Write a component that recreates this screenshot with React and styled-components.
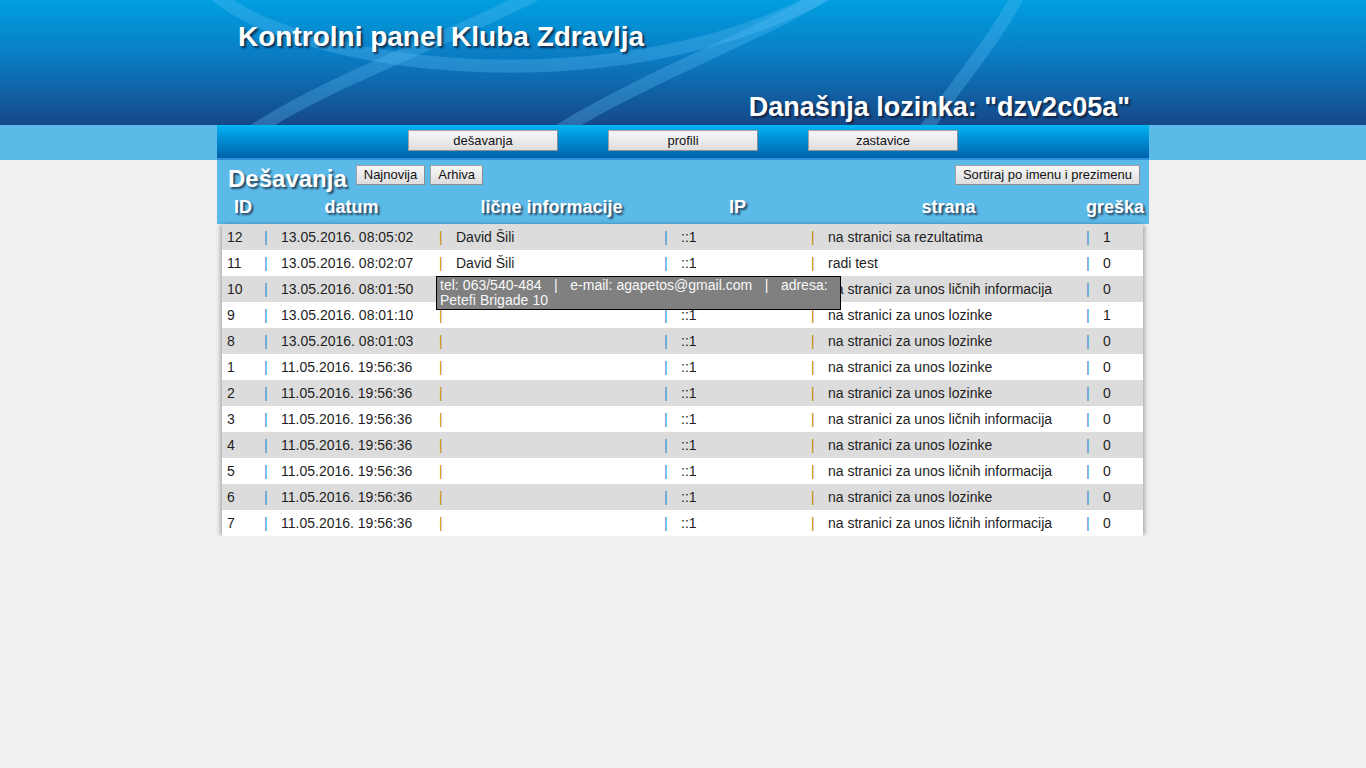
import React from "react";
import styled, { createGlobalStyle } from "styled-components";

const GlobalStyle = createGlobalStyle`
  html, body { margin: 0; padding: 0; }
  body {
    background: #f0f0f0;
    font-family: "Liberation Sans", Arial, sans-serif;
  }
`;

const Header = styled.header`
  position: relative;
  height: 125px;
  overflow: hidden;
  background: linear-gradient(to bottom, #009fe0 0%, #0a7cc4 45%, #164888 100%);
`;

const Decoration = styled.svg`
  position: absolute;
  left: 0;
  top: 0;
  width: 1366px;
  height: 125px;
  pointer-events: none;
`;

const HeaderInner = styled.div`
  position: relative;
  width: 932px;
  height: 125px;
  margin: 0 auto;
  box-sizing: border-box;
  padding: 21px 19px 2px 21px;
  display: flex;
  flex-direction: column;
  justify-content: space-between;
`;

const HeadText = styled.div`
  color: #fff;
  font-weight: bold;
  font-size: ${(p) => p.$size}px;
  line-height: 32px;
  text-align: ${(p) => p.$align || "left"};
  text-shadow: 2px 2px 2px rgba(20, 20, 40, 0.75);
  white-space: nowrap;
`;

const NavBand = styled.nav`
  background: #5bbae8;
  height: 35px;
`;

const NavInner = styled.div`
  width: 932px;
  height: 35px;
  margin: 0 auto;
  box-sizing: border-box;
  border-bottom: 2px solid #2a8fdc;
  background: linear-gradient(to bottom, #00b6f2 0%, #0090d8 40%, #0062aa 100%);
  display: flex;
  justify-content: center;
  align-items: flex-start;
  gap: 50px;
  padding-top: 5px;
`;

const Button = styled.button`
  box-sizing: border-box;
  height: ${(p) => p.$h || 20}px;
  width: ${(p) => (p.$w ? `${p.$w}px` : "auto")};
  padding: 0 7px;
  margin: 0;
  border: 1px solid #a3a3a3;
  border-right-color: #8e8e8e;
  border-bottom-color: #8e8e8e;
  border-radius: 0;
  background: linear-gradient(to bottom, #f7f7f7 0%, #ebebeb 50%, #dddddd 100%);
  color: #111;
  font-family: "Liberation Sans", Arial, sans-serif;
  font-size: 13px;
  line-height: 18px;
  cursor: pointer;
`;

const Section = styled.section`
  width: 932px;
  margin: 0 auto;
  background: #5bbae8;
`;

const TitleRow = styled.div`
  display: flex;
  align-items: flex-start;
  height: 33px;
  padding: 0 9px 0 11px;
  gap: 5px;
`;

const SectionTitle = styled.h1`
  margin: 4px 4px 0 0;
  font-size: 24px;
  line-height: 30px;
  font-weight: bold;
  color: #fff;
  text-shadow: 2px 2px 2px rgba(20, 20, 40, 0.7);
`;

const TopButtonWrap = styled.div`
  margin-top: 5px;
  display: flex;
  gap: 5px;
  margin-left: ${(p) => (p.$push ? "auto" : "0")};
`;

const COLS = "42px 175px 225px 147px 275px 57px";

const HeadRow = styled.div`
  display: grid;
  grid-template-columns: ${COLS};
  padding: 0 6px 0 5px;
  height: 31px;
`;

const HeadCell = styled.div`
  text-align: center;
  font-size: 18px;
  font-weight: bold;
  line-height: 28px;
  color: #fff;
  text-shadow: 2px 2px 2px rgba(20, 20, 40, 0.7);
  white-space: nowrap;
`;

const TableWrap = styled.div`
  width: 932px;
  margin: 0 auto;
  box-sizing: border-box;
  padding: 0 6px 0 5px;
`;

const Table = styled.div`
  position: relative;
  background: #fff;
  box-shadow: -3px 0 4px -1px rgba(0, 0, 0, 0.28), 3px 0 4px -1px rgba(0, 0, 0, 0.28);
`;

const Row = styled.div`
  display: grid;
  grid-template-columns: ${COLS};
  height: 26px;
  background: ${(p) => (p.$alt ? "#dcdcdc" : "#ffffff")};
`;

const Cell = styled.div`
  font-size: 14px;
  line-height: 26px;
  color: #1e1e1e;
  white-space: nowrap;
  overflow: visible;
  padding-left: ${(p) => (p.$first ? 5 : 0)}px;
`;

const Pipe = styled.span`
  display: inline-block;
  width: 17px;
  color: ${(p) => (p.$tone === "orange" ? "#c4880e" : "#2f8fd6")};
`;

const Tooltip = styled.div`
  position: absolute;
  left: 214px;
  top: 52px;
  width: 405px;
  box-sizing: border-box;
  padding: 1px 3px;
  background: #808080;
  border: 1px solid #000;
  color: #f8f8f8;
  font-size: 14px;
  line-height: 15px;
  word-spacing: 0.3px;
  z-index: 2;
`;

const rows = [
  ["12", "13.05.2016. 08:05:02", "David Šili", "::1", "na stranici sa rezultatima", "1"],
  ["11", "13.05.2016. 08:02:07", "David Šili", "::1", "radi test", "0"],
  ["10", "13.05.2016. 08:01:50", "", "::1", "na stranici za unos ličnih informacija", "0"],
  ["9", "13.05.2016. 08:01:10", "", "::1", "na stranici za unos lozinke", "1"],
  ["8", "13.05.2016. 08:01:03", "", "::1", "na stranici za unos lozinke", "0"],
  ["1", "11.05.2016. 19:56:36", "", "::1", "na stranici za unos lozinke", "0"],
  ["2", "11.05.2016. 19:56:36", "", "::1", "na stranici za unos lozinke", "0"],
  ["3", "11.05.2016. 19:56:36", "", "::1", "na stranici za unos ličnih informacija", "0"],
  ["4", "11.05.2016. 19:56:36", "", "::1", "na stranici za unos lozinke", "0"],
  ["5", "11.05.2016. 19:56:36", "", "::1", "na stranici za unos ličnih informacija", "0"],
  ["6", "11.05.2016. 19:56:36", "", "::1", "na stranici za unos lozinke", "0"],
  ["7", "11.05.2016. 19:56:36", "", "::1", "na stranici za unos ličnih informacija", "0"],
];

const tones = ["blue", "orange", "blue", "orange", "blue"];
const heads = ["ID", "datum", "lične informacije", "IP", "strana", "greška"];
const sep = "\u00a0\u00a0\u00a0|\u00a0\u00a0\u00a0";

export default function App() {
  return (
    <>
      <GlobalStyle />
      <Header>
        <Decoration viewBox="0 0 1366 125">
          <g fill="none" stroke="rgba(90, 190, 245, 0.32)" strokeWidth="13">
            <path d="M 212 -8 C 300 70, 620 110, 830 -8" />
            <path d="M 255 130 C 330 80, 470 30, 540 -8" />
            <path d="M 560 130 C 660 70, 750 40, 830 -8" />
            <path d="M 925 130 C 960 80, 995 40, 1020 -8" />
          </g>
        </Decoration>
        <HeaderInner>
          <HeadText $size={28}>Kontrolni panel Kluba Zdravlja</HeadText>
          <HeadText $size={27} $align="right">Današnja lozinka: "dzv2c05a"</HeadText>
        </HeaderInner>
      </Header>
      <NavBand>
        <NavInner>
          <Button $w={150} $h={21}>dešavanja</Button>
          <Button $w={150} $h={21}>profili</Button>
          <Button $w={150} $h={21}>zastavice</Button>
        </NavInner>
      </NavBand>
      <Section>
        <TitleRow>
          <SectionTitle>Dešavanja</SectionTitle>
          <TopButtonWrap>
            <Button>Najnovija</Button>
            <Button>Arhiva</Button>
          </TopButtonWrap>
          <TopButtonWrap $push>
            <Button>Sortiraj po imenu i prezimenu</Button>
          </TopButtonWrap>
        </TitleRow>
        <HeadRow>
          {heads.map((h) => (
            <HeadCell key={h}>{h}</HeadCell>
          ))}
        </HeadRow>
      </Section>
      <TableWrap>
        <Table>
          {rows.map((r, i) => (
            <Row key={r[0]} $alt={i % 2 === 0}>
              {r.map((v, j) =>
                j === 0 ? (
                  <Cell key={j} $first>
                    {v}
                  </Cell>
                ) : (
                  <Cell key={j}>
                    <Pipe $tone={tones[j - 1]}>|</Pipe>
                    {v}
                  </Cell>
                )
              )}
            </Row>
          ))}
          <Tooltip>
            tel: 063/540-484{sep}e-mail: agapetos@gmail.com{sep}adresa: Petefi Brigade 10
          </Tooltip>
        </Table>
      </TableWrap>
    </>
  );
}
